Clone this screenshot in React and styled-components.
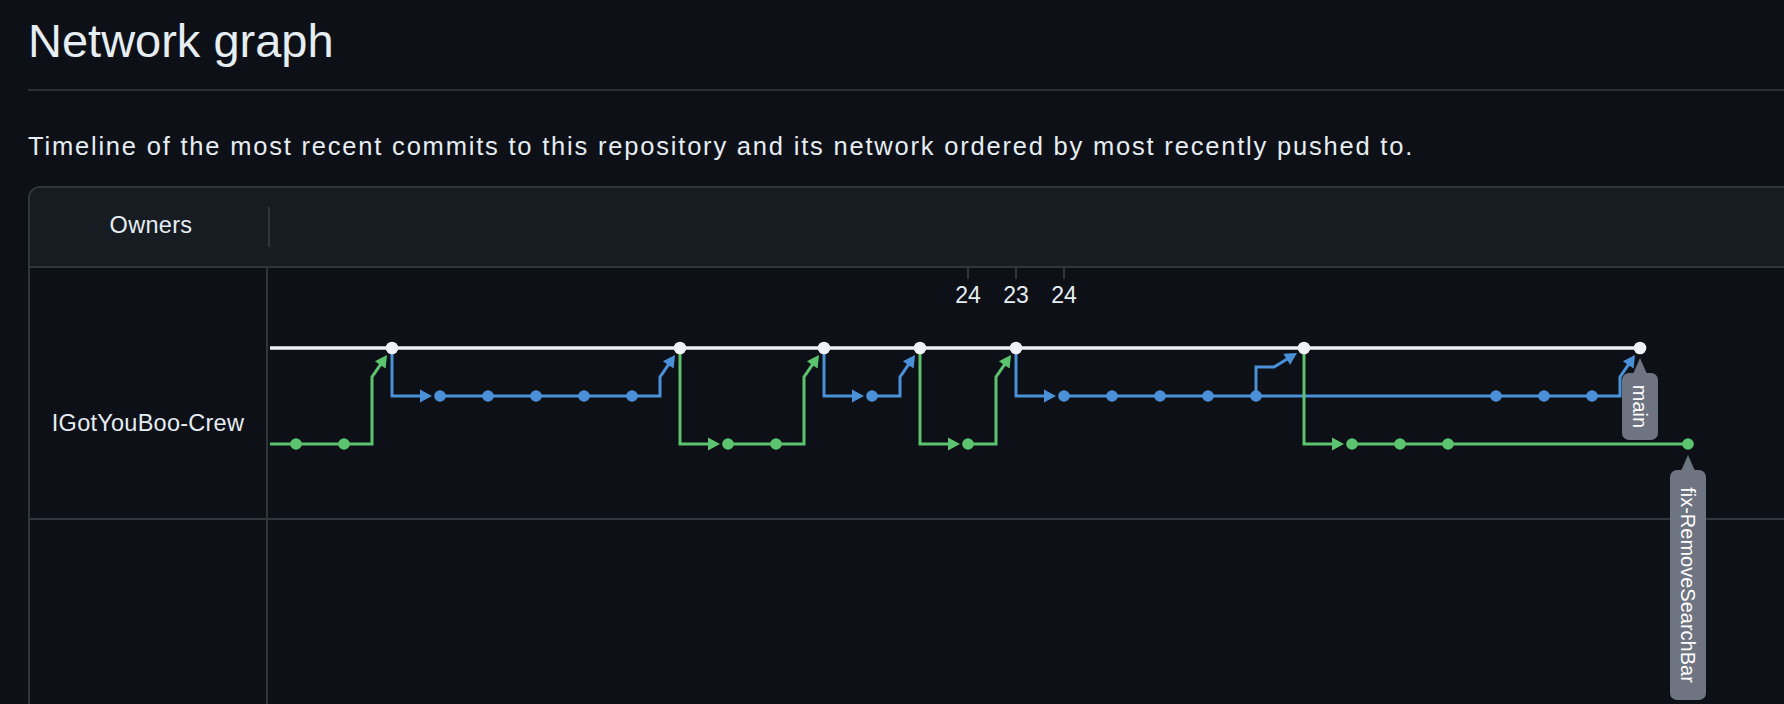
import React from "react";
import styled, { createGlobalStyle } from "styled-components";

const GlobalStyle = createGlobalStyle`
  html, body { margin: 0; padding: 0; background: #0d1117; overflow: hidden; }
  body { font-family: "Liberation Sans", Arial, Helvetica, sans-serif; color: #e6edf3; }
`;

const Page = styled.main`
  width: 2000px;
  padding: 13px 0 0 28px;
  box-sizing: border-box;
`;

const Title = styled.h1`
  margin: 0;
  font-size: 47px;
  line-height: 56px;
  font-weight: 400;
  letter-spacing: 0;
  color: #e6edf3;
  padding-bottom: 20px;
  border-bottom: 2px solid #2b3038;
`;

const Lead = styled.p`
  margin: 40px 0 25px;
  font-size: 25.5px;
  line-height: 30px;
  letter-spacing: 1.8px;
  color: #e6edf3;
`;

const Card = styled.section`
  border: 2px solid #30363d;
  border-radius: 12px;
  overflow: hidden;
  width: 1900px;
`;

const Header = styled.div`
  display: grid;
  grid-template-columns: 238px 2px 1fr;
  align-items: center;
  height: 78px;
  background: #171b22;
  border-bottom: 2px solid #30363d;
`;

const HeadCell = styled.div`
  text-align: center;
  font-size: 23.5px;
  line-height: 23px;
  letter-spacing: 0.3px;
  padding: 0 0 3px 4px;
  color: #e6edf3;
`;

const HeadDivider = styled.div`
  width: 2px;
  height: 40px;
  background: #30363d;
`;

const Body = styled.div`
  position: relative;
`;

const Row = styled.div`
  display: grid;
  grid-template-columns: 238px 1fr;
  height: ${(p) => p.$h}px;
  border-bottom: ${(p) => (p.$last ? "none" : "2px solid #30363d")};
`;

const OwnerCell = styled.div`
  border-right: 2px solid #30363d;
  text-align: center;
  padding-top: ${(p) => p.$offset}px;
  font-size: 23.5px;
  line-height: 23px;
  letter-spacing: 0.25px;
  color: #e6edf3;
`;

const GraphCell = styled.div``;

const Canvas = styled.svg`
  position: absolute;
  left: 240px;
  top: 0;
  overflow: visible;
  pointer-events: none;
`;

const Edge = styled.path`
  fill: none;
  stroke: ${(p) => p.$c};
  stroke-width: ${(p) => p.$w || 3};
  stroke-linejoin: miter;
  stroke-linecap: butt;
`;

const TickText = styled.text`
  font-family: "Liberation Sans", Arial, sans-serif;
  font-size: 23px;
  fill: #e6edf3;
`;

const LabelText = styled.text`
  font-family: "Liberation Sans", Arial, sans-serif;
  font-size: 20px;
  fill: #ffffff;
`;

const C = (c) => 26 + 48 * c;
const W = 80;
const B = 128;
const G = 176;
const WHITE = "#eef1f5";
const BLUE = "#4b91d8";
const GREEN = "#5cc46e";

function head(sx, sy, tx, ty, L = 12, hw = 6.5) {
  const dx = tx - sx;
  const dy = ty - sy;
  const len = Math.hypot(dx, dy);
  const ux = dx / len;
  const uy = dy / len;
  const bx = tx - L * ux;
  const by = ty - L * uy;
  const nx = -uy;
  const ny = ux;
  return {
    bx: bx + ux * 1,
    by: by + uy * 1,
    pts: `${tx},${ty} ${bx + hw * nx},${by + hw * ny} ${bx - hw * nx},${by - hw * ny}`,
  };
}

function Fork({ pc, pr, cc, cr, color }) {
  const x = C(cc);
  return (
    <g>
      <Edge $c={color} d={`M${C(pc)} ${pr} V${cr} H${x - 19}`} />
      <polygon fill={color} points={`${x - 20},${cr - 6.5} ${x - 8},${cr} ${x - 20},${cr + 6.5}`} />
    </g>
  );
}

function Merge({ px, pr, cc, cr, color }) {
  const x = C(cc);
  const sx = x - 20;
  const sy = cr + 29;
  const h = head(sx, sy, x - 5, cr + 7);
  return (
    <g>
      <Edge $c={color} d={`M${px} ${pr} H${sx} V${sy} L${h.bx} ${h.by}`} />
      <polygon fill={color} points={h.pts} />
    </g>
  );
}

function SideMerge({ pc, pr, cc, cr, color }) {
  const x = C(cc);
  const yTop = cr + 19;
  const sx = x - 30;
  const h = head(sx, yTop, x - 7, cr + 5);
  return (
    <g>
      <Edge $c={color} d={`M${C(pc)} ${pr} V${yTop} H${sx} L${h.bx} ${h.by}`} />
      <polygon fill={color} points={h.pts} />
    </g>
  );
}

function Line({ x1, x2, y, color, w }) {
  return <Edge $c={color} $w={w} d={`M${x1} ${y} H${x2}`} />;
}

function BranchLabel({ x, tipY, top, height, text }) {
  const cy = top + height / 2;
  return (
    <g>
      <polygon fill="#6e7481" points={`${x},${tipY} ${x - 7},${top + 1} ${x + 7},${top + 1}`} />
      <rect x={x - 18} y={top} width={36} height={height} rx={7} fill="#6e7481" />
      <LabelText
        x={x}
        y={cy}
        textAnchor="middle"
        dominantBaseline="central"
        transform={`rotate(90 ${x} ${cy})`}
      >
        {text}
      </LabelText>
    </g>
  );
}

const whiteNodes = [2, 8, 11, 13, 15, 21, 28];
const blueNodes = [3, 4, 5, 6, 7, 12, 16, 17, 18, 19, 20, 25, 26, 27];
const greenNodes = [0, 1, 9, 10, 14, 22, 23, 24, 29];
const ticks = [
  [14, "24"],
  [15, "23"],
  [16, "24"],
];

function NetworkGraph() {
  return (
    <Canvas width={1560} height={450} viewBox="0 0 1560 450">
      {ticks.map(([c]) => (
        <line key={`t${c}`} x1={C(c)} x2={C(c)} y1={-1} y2={11} stroke="#30363d" strokeWidth={2} />
      ))}
      {ticks.map(([c, t]) => (
        <TickText key={`tt${c}`} x={C(c)} y={35} textAnchor="middle">
          {t}
        </TickText>
      ))}

      {/* blue branch */}
      <Fork pc={2} pr={W} cc={3} cr={B} color={BLUE} />
      <Line x1={C(3)} x2={C(7)} y={B} color={BLUE} />
      <Merge px={C(7)} pr={B} cc={8} cr={W} color={BLUE} />
      <Fork pc={11} pr={W} cc={12} cr={B} color={BLUE} />
      <Merge px={C(12)} pr={B} cc={13} cr={W} color={BLUE} />
      <Fork pc={15} pr={W} cc={16} cr={B} color={BLUE} />
      <Line x1={C(16)} x2={C(27)} y={B} color={BLUE} />
      <SideMerge pc={20} pr={B} cc={21} cr={W} color={BLUE} />
      <Merge px={C(27)} pr={B} cc={28} cr={W} color={BLUE} />

      {/* green branch */}
      <Merge px={0} pr={G} cc={2} cr={W} color={GREEN} />
      <Fork pc={8} pr={W} cc={9} cr={G} color={GREEN} />
      <Merge px={C(9)} pr={G} cc={11} cr={W} color={GREEN} />
      <Fork pc={13} pr={W} cc={14} cr={G} color={GREEN} />
      <Merge px={C(14)} pr={G} cc={15} cr={W} color={GREEN} />
      <Fork pc={21} pr={W} cc={22} cr={G} color={GREEN} />
      <Line x1={C(22)} x2={C(29)} y={G} color={GREEN} />

      {/* main */}
      <Line x1={0} x2={C(28)} y={W} color={WHITE} w={3.5} />

      {blueNodes.map((c) => (
        <circle key={`b${c}`} cx={C(c)} cy={B} r={5.8} fill={BLUE} />
      ))}
      {greenNodes.map((c) => (
        <circle key={`g${c}`} cx={C(c)} cy={G} r={5.8} fill={GREEN} />
      ))}
      {whiteNodes.map((c) => (
        <circle key={`w${c}`} cx={C(c)} cy={W} r={6.3} fill={WHITE} />
      ))}

      <BranchLabel x={C(28)} tipY={90} top={105} height={67} text="main" />
      <BranchLabel x={C(29)} tipY={187} top={202} height={230} text="fix-RemoveSearchBar" />
    </Canvas>
  );
}

export default function App() {
  return (
    <>
      <GlobalStyle />
      <Page>
        <Title>Network graph</Title>
        <Lead>
          Timeline of the most recent commits to this repository and its network ordered by most
          recently pushed to.
        </Lead>
        <Card>
          <Header>
            <HeadCell>Owners</HeadCell>
            <HeadDivider />
            <div />
          </Header>
          <Body>
            <Row $h={250}>
              <OwnerCell $offset={144}>IGotYouBoo-Crew</OwnerCell>
              <GraphCell />
            </Row>
            <Row $h={260} $last>
              <OwnerCell $offset={0} />
              <GraphCell />
            </Row>
            <NetworkGraph />
          </Body>
        </Card>
      </Page>
    </>
  );
}
